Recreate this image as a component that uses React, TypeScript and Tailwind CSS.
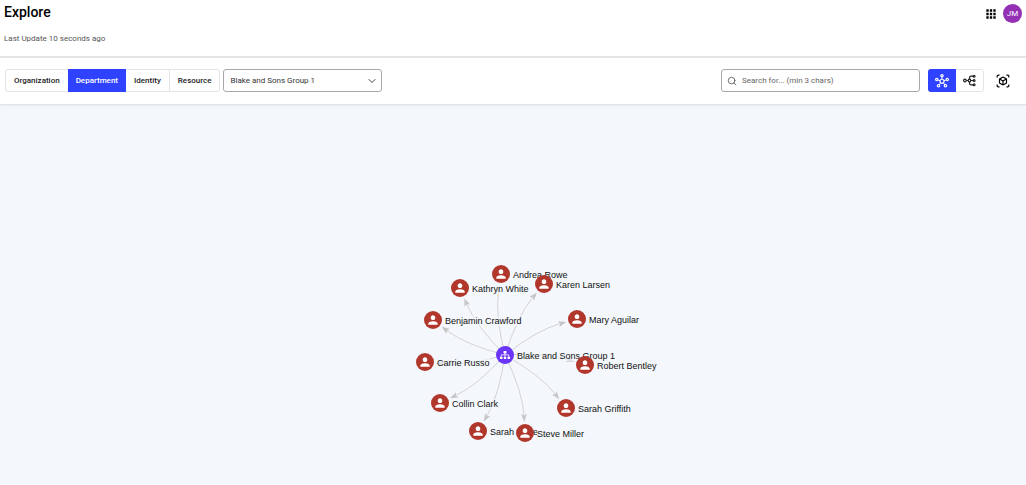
import React from "react";
import { MdApps, MdOutlineHub, MdOutlineViewInAr, MdPerson } from "react-icons/md";
import { FaSitemap } from "react-icons/fa";
import { ChevronDown, Search } from "lucide-react";

type GraphNode = { name: string; x: number; y: number };

// Positions are offsets from the top centre of the canvas.
const HUB: GraphNode = { name: "Blake and Sons Group 1", x: -8, y: 250 };

const MEMBERS: GraphNode[] = [
  { name: "Andrea Rowe", x: -12, y: 169 },
  { name: "Kathryn White", x: -53, y: 183 },
  { name: "Karen Larsen", x: 31, y: 179 },
  { name: "Benjamin Crawford", x: -80, y: 215 },
  { name: "Mary Aguilar", x: 64, y: 214 },
  { name: "Carrie Russo", x: -88, y: 257 },
  { name: "Robert Bentley", x: 72, y: 260 },
  { name: "Collin Clark", x: -73, y: 298 },
  { name: "Sarah Griffith", x: 53, y: 303 },
  { name: "Sarah Lowe", x: -35, y: 326 },
  { name: "Steve Miller", x: 12, y: 328 },
];

const TABS = ["Organization", "Department", "Identity", "Resource"];

function Edge({ to }: { to: GraphNode }) {
  const dx = to.x - HUB.x;
  const dy = to.y - HUB.y;
  const length = Math.hypot(dx, dy);
  const cx = HUB.x + dx / 2 + (dy / length) * 8;
  const cy = HUB.y + dy / 2 - (dx / length) * 8;
  const back = Math.hypot(cx - to.x, cy - to.y);
  const ux = (cx - to.x) / back;
  const uy = (cy - to.y) / back;
  const tip = [to.x + ux * 11, to.y + uy * 11];
  const base = [to.x + ux * 19, to.y + uy * 19];
  const notch = [to.x + ux * 17.5, to.y + uy * 17.5];
  const head = [
    tip,
    [base[0] - uy * 3, base[1] + ux * 3],
    notch,
    [base[0] + uy * 3, base[1] - ux * 3],
  ];
  return (
    <g>
      <path
        d={`M${HUB.x} ${HUB.y} Q${cx} ${cy} ${notch[0]} ${notch[1]}`}
        fill="none"
        stroke="#d3d3d3"
        strokeWidth="1"
      />
      <polygon points={head.map((p) => p.join(",")).join(" ")} fill="#c6c6c6" />
    </g>
  );
}

function NodeMark({ node, hub = false }: { node: GraphNode; hub?: boolean }) {
  return (
    <div
      className="absolute -ml-[9px] -mt-[9px] flex items-center gap-[3px] whitespace-nowrap"
      style={{ left: node.x, top: node.y }}
    >
      <span
        className={
          hub
            ? "flex size-[18px] items-center justify-center rounded-full bg-[#6a35f7] text-white"
            : "flex size-[18px] items-center justify-center rounded-full bg-[#b1372d] text-white"
        }
      >
        {hub ? <FaSitemap size={10} /> : <MdPerson size={14} />}
      </span>
      <span className="mt-[2px] bg-[#f4f7fc]/60 font-['Liberation_Sans',sans-serif] text-[9px] leading-[10px] text-[#111111]">
        {node.name}
      </span>
    </div>
  );
}

function TreeIcon() {
  return (
    <svg width="13" height="13" viewBox="0 0 24 24" fill="none" stroke="currentColor" strokeWidth="2.2">
      <circle cx="3.5" cy="12" r="2.4" />
      <circle cx="12" cy="12" r="2.4" />
      <path d="M6 12h3.5M14.5 12H19M12 9.5V7a3 3 0 0 1 3-3h4M12 14.5V17a3 3 0 0 0 3 3h4" />
      <circle cx="20.5" cy="4" r="1.7" />
      <circle cx="20.5" cy="12" r="1.7" />
      <circle cx="20.5" cy="20" r="1.7" />
    </svg>
  );
}

export default function App() {
  return (
    <div className="flex min-h-screen flex-col bg-[#f4f7fc] font-['Roboto',sans-serif] text-[8px] text-[#1c1c1c]">
      <header className="flex items-start justify-between border-b-2 border-[#e4e4e4] bg-white pb-3 pl-1 pr-1 pt-1">
        <div>
          <h1 className="text-[14px] font-medium leading-4 text-black">Explore</h1>
          <p className="mt-[14px] leading-[10px] text-[#555555]">Last Update 10 seconds ago</p>
        </div>
        <div className="flex items-center gap-[5px]">
          <button aria-label="Apps" className="text-black">
            <MdApps size={14} />
          </button>
          <button
            aria-label="Account"
            className="flex size-[19px] items-center justify-center rounded-full bg-[#9330b4] text-white"
          >
            JM
          </button>
        </div>
      </header>

      <div className="flex items-center border-b border-[#e2e4e8] bg-white px-[5px] pb-3 pt-[11px] shadow-xs">
        <nav className="flex h-[23px] rounded-[3px] border border-[#e4e4e4] font-medium">
          {TABS.map((tab) => (
            <button
              key={tab}
              className={
                tab === "Department"
                  ? "-my-px bg-[#2f42ff] px-2 text-white"
                  : tab === "Identity"
                    ? "border-r border-[#e4e4e4] px-2"
                    : "px-2"
              }
            >
              {tab}
            </button>
          ))}
        </nav>
        <div className="relative ml-[3px] w-[159px]">
          <select
            aria-label="Group"
            className="h-[23px] w-full appearance-none rounded-[3px] border border-[#a8a8a8] bg-white px-[6px] text-[#333333]"
          >
            <option>Blake and Sons Group 1</option>
          </select>
          <ChevronDown size={12} className="pointer-events-none absolute right-1 top-[6px] text-[#444444]" />
        </div>
        <label className="ml-auto flex h-[23px] w-[199px] items-center gap-[5px] rounded-[3px] border border-[#a8a8a8] px-[5px]">
          <Search size={10} className="text-[#555555]" />
          <input
            aria-label="Search"
            placeholder="Search for... (min 3 chars)"
            className="min-w-0 flex-1 outline-none placeholder:text-[#666666]"
          />
        </label>
        <div className="ml-2 flex h-[23px] rounded-[3px] border border-[#e4e4e4]">
          <button
            aria-label="Network view"
            className="-my-px -ml-px flex w-7 items-center justify-center rounded-l-[3px] bg-[#2f42ff] text-white"
          >
            <MdOutlineHub size={14} />
          </button>
          <button aria-label="Tree view" className="flex w-[27px] items-center justify-center text-[#222222]">
            <TreeIcon />
          </button>
        </div>
        <button aria-label="3D view" className="ml-3 mr-[11px] text-black">
          <MdOutlineViewInAr size={14} />
        </button>
      </div>

      <main className="relative min-h-[360px] flex-1 overflow-hidden">
        <div className="absolute left-1/2 top-0">
          <svg width="1" height="1" className="absolute overflow-visible" aria-hidden="true">
            {MEMBERS.map((m) => (
              <Edge key={m.name} to={m} />
            ))}
          </svg>
          <NodeMark node={HUB} hub />
          {MEMBERS.map((m) => (
            <NodeMark key={m.name} node={m} />
          ))}
        </div>
      </main>
    </div>
  );
}
